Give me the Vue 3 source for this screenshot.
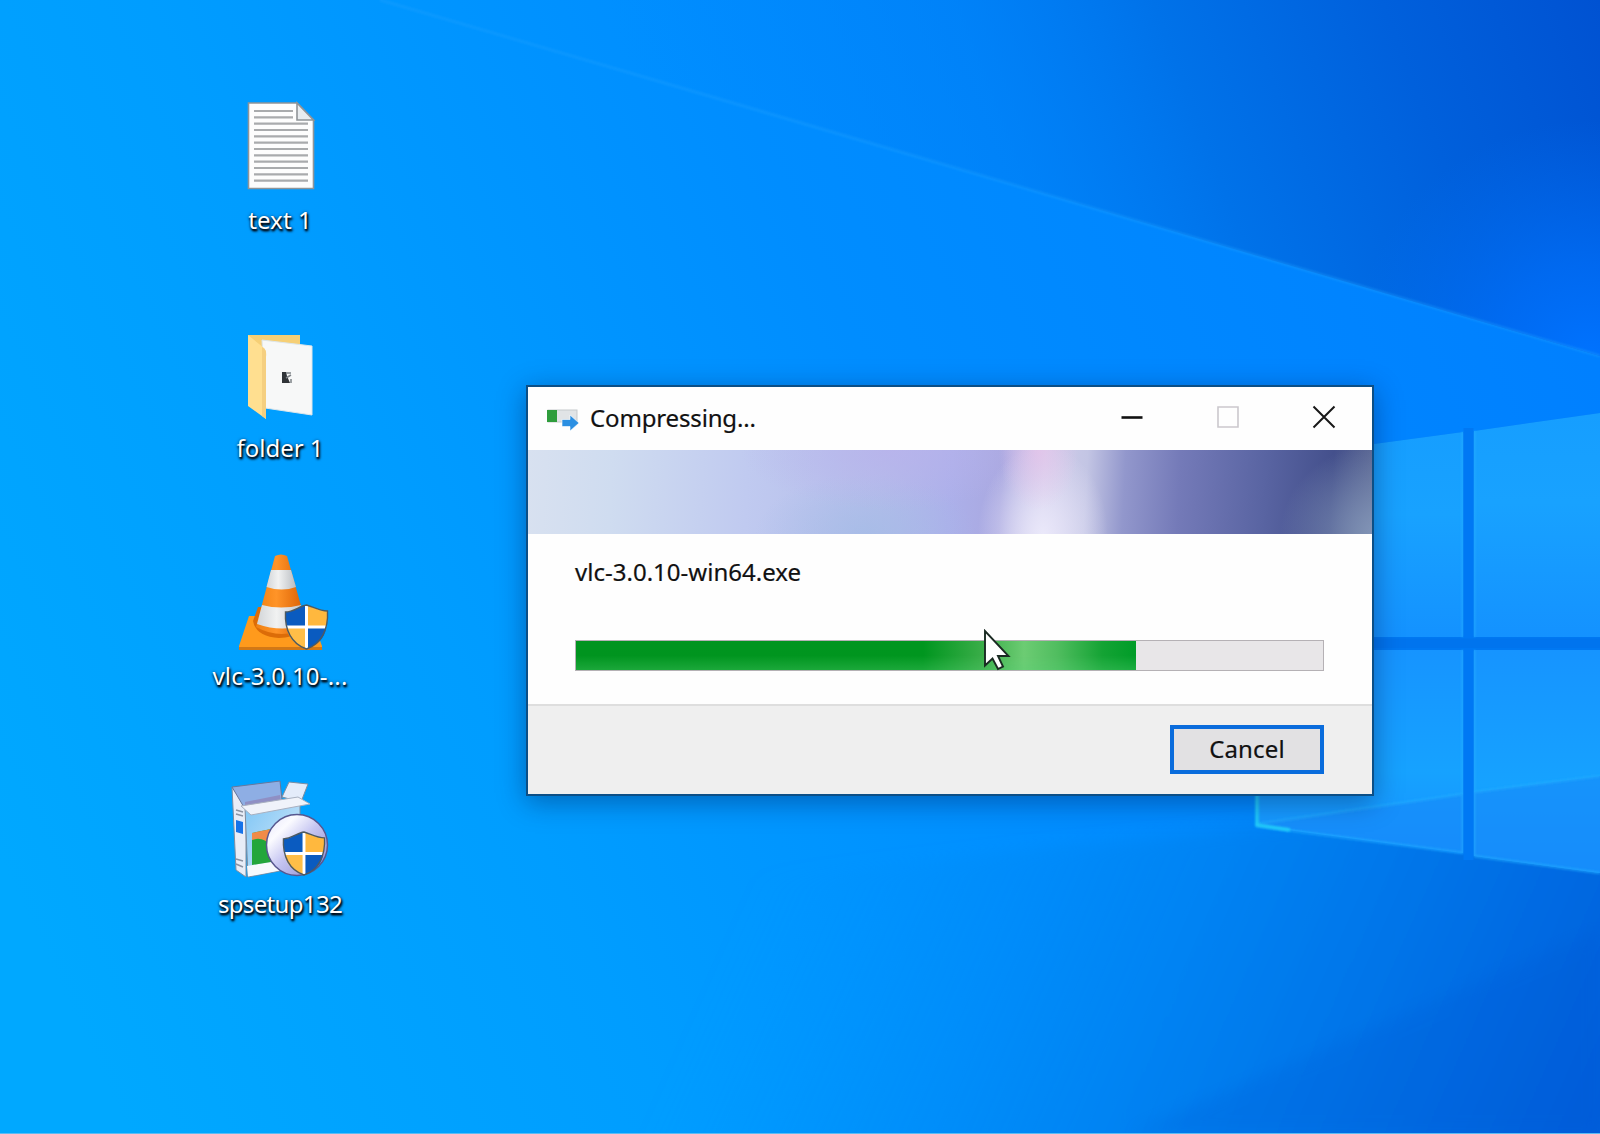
<script setup>
const files = [
  { name: 'text 1', kind: 'doc', spacing: 0.1 },
  { name: 'folder 1', kind: 'folder', spacing: 0 },
  { name: 'vlc-3.0.10-...', kind: 'vlc', spacing: 0.2 },
  { name: 'spsetup132', kind: 'setup', spacing: -0.65 },
]
const progress = 75
</script>

<template>
  <main class="desktop">
    <svg class="wallpaper" viewBox="0 0 1600 1134" preserveAspectRatio="none">
      <defs>
        <linearGradient id="bg" gradientUnits="userSpaceOnUse" x1="0" y1="860" x2="1500" y2="160">
          <stop offset="0" stop-color="#00a8ff" />
          <stop offset=".3" stop-color="#009dff" />
          <stop offset=".6" stop-color="#008dff" />
          <stop offset="1" stop-color="#0080ff" />
        </linearGradient>
        <linearGradient id="upper" gradientUnits="userSpaceOnUse" x1="730" y1="330" x2="1600" y2="0">
          <stop offset="0" stop-color="#0088fc" stop-opacity="0" />
          <stop offset=".35" stop-color="#007ef4" stop-opacity=".6" />
          <stop offset=".55" stop-color="#0072e9" />
          <stop offset=".78" stop-color="#0060dc" />
          <stop offset="1" stop-color="#0052d2" />
        </linearGradient>
        <radialGradient id="glow" gradientUnits="userSpaceOnUse" cx="1590" cy="360" r="240">
          <stop offset="0" stop-color="#0073ff" />
          <stop offset=".4" stop-color="#006ffa" stop-opacity=".7" />
          <stop offset="1" stop-color="#006cf0" stop-opacity="0" />
        </radialGradient>
        <linearGradient id="lower" gradientUnits="userSpaceOnUse" x1="800" y1="780" x2="1600" y2="1134">
          <stop offset="0" stop-color="#0092fc" stop-opacity="0" />
          <stop offset=".45" stop-color="#0083f2" stop-opacity=".85" />
          <stop offset=".7" stop-color="#0074e8" />
          <stop offset="1" stop-color="#005edb" />
        </linearGradient>
        <linearGradient id="pane" x1="0" y1="0" x2="0" y2="1">
          <stop offset="0" stop-color="#169eff" />
          <stop offset=".4" stop-color="#18a2ff" />
          <stop offset="1" stop-color="#1492ff" />
        </linearGradient>
        <linearGradient id="pane2" x1="0" y1="0" x2="0" y2="1">
          <stop offset="0" stop-color="#1694ff" />
          <stop offset=".6" stop-color="#16a2ff" />
          <stop offset="1" stop-color="#1692ff" />
        </linearGradient>
        <filter id="soft"><feGaussianBlur stdDeviation="1" /></filter>
        <filter id="softer"><feGaussianBlur stdDeviation="8" /></filter>
      </defs>
      <rect width="1600" height="1134" fill="url(#bg)" />
      <path d="M380 0H1600V356Z" fill="url(#upper)" />
      <path d="M380 0H1600V356Z" fill="url(#glow)" />
      <path d="M1620 810V1154H400L560 900L1256 826Z" fill="url(#lower)" filter="url(#softer)" />
      <path d="M1130 1134L1600 930V1134Z" fill="#0050cc" opacity=".16" filter="url(#softer)" />
      <path d="M380 0L1600 356" stroke="#1fa0ff" stroke-width="3" opacity=".4" filter="url(#soft)" />
      <path d="M1256 460L1463 432L1474 431L1600 413V873L1474 856L1256 826Z" fill="#0078f2" />
      <path d="M1256 460L1463 432V637H1256Z" fill="url(#pane)" />
      <path d="M1474 431L1600 413V637H1474Z" fill="url(#pane)" />
      <path d="M1256 650H1463V853L1256 826Z" fill="url(#pane2)" />
      <path d="M1474 650H1600V873L1474 856Z" fill="url(#pane2)" />
      <path d="M1256 824L1463 794V853Z M1474 792L1600 776V873L1474 856Z" fill="#1789f8" opacity=".6" />
      <path d="M1256 824L1463 794M1474 792L1600 776M1463 432V637M1474 431V637M1463 650V853M1474 650V856M1256 826L1463 853M1474 856L1600 873" fill="none" stroke="#22adff" stroke-width="2.5" opacity=".65" filter="url(#soft)" />
      <path d="M1257 650V825L1290 830" fill="none" stroke="#20ccfa" stroke-width="3.5" filter="url(#soft)" />
      <path d="M1463.500 428H1473.500V860H1463.500Z" fill="#0078f4" />
      <path d="M1256 638.500H1600V648H1256Z" fill="#0074ee" />
      <path d="M0 1133.500H1600" stroke="#5cbcf4" />
    </svg>

    <svg class="defs" width="0" height="0">
      <symbol id="shield" viewBox="0 0 46 46">
        <path d="M2 8C10 8 16 2 23 1C30 3 36 7 44 7C45 25 38 40 23 45C8 40 1 26 2 8Z" fill="#fff" />
        <path d="M2 8C10 8 16 2 21.500 1.500V21.500H3C2 17 2 12 2 8Z" fill="#0a5bc0" />
        <path d="M24.500 1.500C31 4 37 7 44 7C44 12 44 17 43 21.500H24.500Z" fill="#ffb83e" />
        <path d="M3.500 24.500H21.500V44.500C11 40 5 34 3.500 24.500Z" fill="#ffbe48" />
        <path d="M24.500 24.500H42.500C41 34 35 40 24.500 44.500Z" fill="#0a5bc0" />
        <path d="M2 8C10 8 16 2 23 1C30 3 36 7 44 7C45 25 38 40 23 45C8 40 1 26 2 8Z" fill="none" stroke="#4e5a60" stroke-width="1.400" />
      </symbol>
    </svg>

    <nav class="icons">
      <div v-for="f in files" :key="f.name" class="item">
        <svg v-if="f.kind === 'doc'" class="glyph" viewBox="-4 1 110 100">
          <path d="M19.500 4H68L84.500 21V89.500H19.500Z" fill="#fdfdfd" stroke="#8f9498" stroke-width="1.600" />
          <path d="M68 4V21H84.500Z" fill="#e8ecef" stroke="#8f9498" stroke-width="1.600" />
          <path d="M25 12H64M25 18.300H64M25 24.600H79M25 31H79M25 37.300H79M25 43.600H79M25 50H79M25 56.300H79M25 62.600H79M25 69H79M25 75.300H79M25 81.600H79" stroke="#a9abad" stroke-width="2.200" />
        </svg>
        <svg v-else-if="f.kind === 'folder'" class="glyph" viewBox="-4 -1 110 100">
          <path d="M19 6H71V60H19Z" fill="#f6cf75" />
          <path d="M33 11L83 17V86L36 79Z" fill="#f7f8f8" stroke="#dde6ea" stroke-width="1" />
          <path d="M19 6L35 19Q38 22 37 28V90L19 77Z" fill="#ffdf90" />
          <path d="M37 24V90L33 87V18Q37 20 37 24Z" fill="#f5cf80" />
          <path d="M53 43H57L58 47L61 54H53Z" fill="#303438" />
          <path d="M57 44H62M57 49L62 46M62 50V54" stroke="#7d8287" stroke-width="1.500" fill="none" />
        </svg>
        <svg v-else-if="f.kind === 'vlc'" class="glyph" viewBox="-4 5 110 100">
          <defs>
            <linearGradient id="org"><stop offset="0" stop-color="#f08010" /><stop offset=".4" stop-color="#ff9428" /><stop offset="1" stop-color="#d65a00" /></linearGradient>
            <linearGradient id="wht"><stop offset="0" stop-color="#d2d5d8" /><stop offset=".4" stop-color="#f1f2f2" /><stop offset="1" stop-color="#b9bdc2" /></linearGradient>
          </defs>
          <path d="M20 65H82L93 95V99H10V95Z" fill="#ff9a1c" />
          <path d="M10 96H93V99H10Z" fill="#d27816" />
          <path d="M24 70Q27 86 50 87Q76 86 79 70L71 56H29Z" fill="#dc6c08" />
          <path d="M46 5Q52 2 58 5L78 76Q53 90 27 76Z" fill="url(#org)" />
          <path d="M42 19H62L67 36Q53 41 37.500 36Z" fill="url(#wht)" />
          <path d="M33 54Q52 59 72 54L77 73Q54 82 28 73Z" fill="url(#wht)" />
          <use href="#shield" x="54" y="53" width="47" height="46" />
        </svg>
        <svg v-else class="glyph" viewBox="-3 4 110 100">
          <defs>
            <linearGradient id="front" x1="0" y1="0" x2="1" y2="1"><stop offset="0" stop-color="#7dc5f5" /><stop offset=".6" stop-color="#b5dcf8" /><stop offset="1" stop-color="#fff" /></linearGradient>
            <linearGradient id="disc" x1="0" y1="0" x2="1" y2="1"><stop offset="0" stop-color="#e4e4fc" /><stop offset=".25" stop-color="#fbfbff" /><stop offset=".5" stop-color="#c6c6f2" /><stop offset="1" stop-color="#8585cc" /></linearGradient>
          </defs>
          <path d="M4 7L18 27V97L8 90Z" fill="#e8edf7" stroke="#7f8da0" />
          <path d="M4 7L52 1L54 20L17 29Z" fill="#8eaee4" stroke="#66789c" />
          <path d="M17 22L52 15L53 23L17 30Z" fill="#8f8fc4" />
          <path d="M54 17L61 2L80 4L73 22Z" fill="#e4ecfa" stroke="#7f8da0" />
          <path d="M17 28L72 20V87L20 97Z" fill="url(#front)" stroke="#7f8da0" />
          <path d="M19 86L60 79V89L20 96.500Z" fill="#f6f9fd" />
          <path d="M13 26L70 17L82 24L23 35Z" fill="#f0f3fa" stroke="#a8b0c0" />
          <path d="M24 53L43 49V82L24 85Z" fill="#23a63b" />
          <path d="M24 53L43 49V66Q35 56 24 60Z" fill="#f08b48" />
          <path d="M8 40L15 42V54L8 52Z" fill="#1672e8" />
          <path d="M8 30L15 32M8 34L15 36M8 79L15 81M8 84L15 87" stroke="#8b93a2" stroke-width="1.500" />
          <circle cx="69" cy="65" r="30.500" fill="url(#disc)" stroke="#57578f" stroke-width="1.500" />
          <use href="#shield" x="53" y="51" width="46" height="45" />
        </svg>
        <span class="label" :style="{ letterSpacing: f.spacing + 'px' }">{{ f.name }}</span>
      </div>
    </nav>

    <section class="dialog">
      <header class="titlebar">
        <svg class="app" viewBox="0 0 34 24" width="34" height="24">
          <rect x="1" y="1" width="29" height="12" fill="#e1e4e6" stroke="#c5c9cc" />
          <rect x="0" y="1" width="10" height="12" fill="#2f9d3c" />
          <path d="M15 10.500H23V6L32 14L23 22V17.500H15Z" fill="#2b8fe2" stroke="#fff" stroke-width=".6" />
        </svg>
        <h1 class="title">Compressing...</h1>
        <div class="controls">
          <svg viewBox="0 0 24 24"><path d="M1.500 12.500H22.500" stroke="#111" stroke-width="2.600" /></svg>
          <svg viewBox="0 0 24 24"><path d="M2 2H22V22H2Z" fill="none" stroke="#cbc8cd" stroke-width="1.600" /></svg>
          <svg viewBox="0 0 24 24"><path d="M1.500 1.500L22.500 22.500M22.500 1.500L1.500 22.500" stroke="#181818" stroke-width="2" /></svg>
        </div>
      </header>
      <div class="banner"></div>
      <div class="body">
        <p class="file">vlc-3.0.10-win64.exe</p>
        <div class="track"><div class="fill" :style="{ width: progress + '%' }"></div></div>
      </div>
      <footer class="footer"><button class="cancel">Cancel</button></footer>
    </section>

    <svg class="cursor" viewBox="0 0 28 42" width="28" height="42">
      <path d="M2 2V36.500L9.500 29.500L15 40L20 37.500L15 27H25.500Z" fill="#fff" stroke="#1a2a22" stroke-width="1.900" />
    </svg>
  </main>
</template>

<style>
body { margin: 0; overflow: hidden; }
</style>

<style scoped>
.desktop {
  position: relative;
  width: 1600px;
  height: 1134px;
  overflow: hidden;
  background: #0091ff;
  font-family: "Noto Sans", "Open Sans", sans-serif;
}
.wallpaper { position: absolute; inset: 0; width: 1600px; height: 1134px; }
.defs { position: absolute; }
.icons {
  position: absolute;
  left: 180px;
  top: 100px;
  width: 200px;
  display: flex;
  flex-direction: column;
}
.item { height: 228px; display: flex; flex-direction: column; align-items: center; }
.glyph { width: 110px; height: 100px; flex: none; overflow: visible; }
.label {
  margin-top: 4px;
  font-size: 24px;
  line-height: 32px;
  white-space: nowrap;
  color: #fff;
  text-shadow: 1px 2px 3px #000, 1px 2px 2px #001a33, 0 0 3px rgba(0, 20, 50, 0.5);
}
.dialog {
  position: absolute;
  left: 526px;
  top: 385px;
  width: 848px;
  height: 411px;
  box-sizing: border-box;
  border: 2px solid #0c4f86;
  background: #fefefe;
  display: flex;
  flex-direction: column;
  color: #111;
  box-shadow: 0 6px 26px rgba(0, 20, 70, 0.4);
}
.titlebar { height: 63px; display: flex; align-items: center; padding: 0 36px 0 19px; flex: none; }
.app { margin-top: 4px; }
.title {
  margin: -2px 0 0 9px;
  font-size: 24px;
  font-weight: 400;
  letter-spacing: -0.15px;
  -webkit-text-stroke: 0.2px #111;
}
.controls { margin-left: auto; display: flex; gap: 72px; margin-top: -4px; }
.controls svg { width: 24px; height: 24px; }
.banner {
  height: 84px;
  flex: none;
  background:
    radial-gradient(ellipse 100px 90px at 101% 100%, #8497b8, transparent),
    radial-gradient(ellipse 40px 60px at 60.500% 0, #e6c4eacc, transparent),
    radial-gradient(ellipse 65px 90px at 61% 100%, #eae8fa, transparent),
    radial-gradient(ellipse 150px 60px at 43% 0, #b9b2ecbb, transparent),
    radial-gradient(ellipse 110px 60px at 40% 100%, #a3bce6bb, transparent),
    linear-gradient(93deg, #d8e1f0 0, #cfdcf0 10%, #c0caf0 26%, #b4bcea 42%, #acb0ea 50%, #a9a8e0 56%, #d0cdea 61%, #c3c5e4 66%, #9297cc 70.500%, #747ab8 77%, #5964a2 87%, #44508c 95%, #5d6994);
}
.body { height: 170px; flex: none; box-sizing: border-box; padding: 20px 48px 0 47px; }
.file {
  margin: 0;
  font-size: 24px;
  line-height: 36px;
  letter-spacing: 0.02px;
  -webkit-text-stroke: 0.2px #111;
}
.track {
  margin-top: 50px;
  height: 31px;
  box-sizing: border-box;
  border: 1.500px solid #b5b1b5;
  background: #e8e6e8;
}
.fill {
  height: 100%;
  background:
    linear-gradient(180deg, transparent 50%, rgba(90, 210, 120, 0.3)),
    linear-gradient(90deg, #00941f 0, #00961f 62%, #3cae4a 73%, #6ccc73 80%, #50bd5f 86%, #14a334 94%, #009c28);
}
.footer {
  flex: 1;
  box-sizing: border-box;
  border-top: 2px solid #dedede;
  background: #efefef;
  display: flex;
  justify-content: flex-end;
  align-items: flex-start;
  padding: 19px 48px 0 0;
}
.cancel {
  width: 154px;
  height: 49px;
  box-sizing: border-box;
  border: 4px solid #0a6cdc;
  background: #e2e1e3;
  font: 24px/38px "Noto Sans", "Open Sans", sans-serif;
  letter-spacing: 0.15px;
  -webkit-text-stroke: 0.2px #111;
  padding: 0 0 2px;
  color: #111;
}
.cursor { position: absolute; left: 983px; top: 629px; }
</style>
